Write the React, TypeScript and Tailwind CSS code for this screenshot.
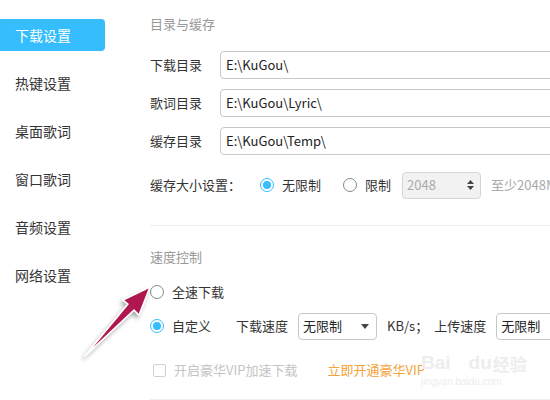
import React from 'react';

const menu = ['下载设置', '热键设置', '桌面歌词', '窗口歌词', '音频设置', '网络设置'];

function Radio({ checked, className = '' }: { checked?: boolean; className?: string }) {
  return checked ? (
    <span className={`w-[14px] h-[14px] rounded-full border-[1.5px] border-[#35bdfe] flex items-center justify-center shrink-0 ${className}`}>
      <span className="w-[8px] h-[8px] rounded-full bg-[#35bdfe]" />
    </span>
  ) : (
    <span className={`block w-[14px] h-[14px] rounded-full border border-[#888] bg-white shrink-0 ${className}`} />
  );
}

function PathRow({ label, value }: { label: string; value: string }) {
  return (
    <div className="flex items-center h-[28px]">
      <span className="w-[70px] shrink-0">{label}</span>
      <div className="w-[360px] shrink-0 h-[28px] border border-[#c8c8c8] rounded-[4px] px-[5px] flex items-center text-[#222]">
        {value}
      </div>
    </div>
  );
}

function Caret() {
  return (
    <svg width="8" height="5" viewBox="0 0 8 5">
      <path d="M0 0h8L4 5z" fill="#444" />
    </svg>
  );
}

export default function App() {
  return (
    <div className="relative w-[550px] h-[400px] overflow-hidden bg-white flex text-[13px] text-[#333] font-['Microsoft_YaHei','Noto_Sans_CJK_SC',sans-serif]">
      {/* Sidebar */}
      <div className="w-[105px] shrink-0 pt-[19px] flex flex-col gap-[16px] text-[14px]">
        {menu.map((m, i) => (
          <div
            key={m}
            className={
              i === 0
                ? 'h-[32px] leading-[32px] pl-[15px] bg-[#35bdfe] text-white rounded-r-[4px]'
                : 'h-[32px] leading-[32px] pl-[15px] text-[#333]'
            }
          >
            {m}
          </div>
        ))}
      </div>

      {/* Content */}
      <div className="ml-[45px] flex-1 min-w-0 flex flex-col">
        <div className="mt-[14px] leading-[20px] text-[#999]">目录与缓存</div>

        <div className="mt-[17px] flex flex-col gap-[10px]">
          <PathRow label="下载目录" value="E:\KuGou\" />
          <PathRow label="歌词目录" value="E:\KuGou\Lyric\" />
          <PathRow label="缓存目录" value="E:\KuGou\Temp\" />
        </div>

        <div className="mt-[16px] flex items-center h-[28px] whitespace-nowrap">
          <span className="w-[110px] shrink-0">缓存大小设置：</span>
          <Radio checked />
          <span className="ml-[8px]">无限制</span>
          <Radio className="ml-[22px]" />
          <span className="ml-[8px]">限制</span>
          <div className="ml-[11px] w-[79px] h-[27px] shrink-0 border border-[#d5d5d5] rounded-[4px] bg-[#f2f2f2] flex items-center justify-between pl-[4px] pr-[6px] text-[#aaa]">
            <span>2048</span>
            <svg width="7" height="12" viewBox="0 0 7 12">
              <path d="M0 5L3.5 1 7 5z M0 7h7L3.5 11z" fill="#444" />
            </svg>
          </div>
          <span className="ml-[10px] text-[#aaa]">至少2048M</span>
        </div>

        <div className="mt-[26px] h-px bg-[#eeeeee]" />

        <div className="mt-[24px] leading-[14px] text-[#999]">速度控制</div>

        <div className="mt-[21px] flex items-center h-[14px]">
          <Radio />
          <span className="ml-[8px]">全速下载</span>
        </div>

        <div className="mt-[13px] flex items-center h-[28px] whitespace-nowrap">
          <Radio checked />
          <span className="ml-[8px] w-[64px] shrink-0">自定义</span>
          <span>下载速度</span>
          <div className="ml-[10px] w-[79px] h-[27px] shrink-0 border border-[#c8c8c8] rounded-[4px] flex items-center justify-between pl-[4px] pr-[7px] text-[#222]">
            <span>无限制</span>
            <Caret />
          </div>
          <span className="ml-[10px]">KB/s；</span>
          <span className="ml-[6px]">上传速度</span>
          <div className="ml-[10px] w-[79px] h-[27px] shrink-0 border border-[#c8c8c8] rounded-[4px] flex items-center justify-between pl-[4px] pr-[7px] text-[#222]">
            <span>无限制</span>
            <Caret />
          </div>
        </div>

        <div className="mt-[22px] flex items-center h-[16px] whitespace-nowrap">
          <span className="ml-[3px] w-[13px] h-[13px] border border-[#d0d0d0] rounded-[2px] shrink-0" />
          <span className="ml-[8px] text-[#c4c4c4]">开启豪华VIP加速下载</span>
          <span className="ml-[30px] text-[#f2a33a]">立即开通豪华VIP</span>
        </div>

        <div className="mt-[21px] h-px bg-[#eeeeee]" />
      </div>

      {/* Watermark */}
      <div className="absolute left-[421px] top-[353px] pointer-events-none leading-none text-[#ededed]">
        <div className="flex items-end font-['Liberation_Sans',sans-serif] text-[19px] font-bold">
          <span>Bai</span>
          <span className="ml-[18px]">du</span>
          <span className="ml-[1px] text-[17px] font-['Noto_Sans_CJK_SC',sans-serif]">经验</span>
        </div>
        <div className="mt-[5px] text-[10px] font-['Liberation_Sans',sans-serif]">jingyan.baidu.com</div>
      </div>

      {/* Annotation arrow */}
      <svg className="absolute left-0 top-0 pointer-events-none" width="550" height="400" viewBox="0 0 550 400">
        <defs>
          <filter id="sh" x="-50%" y="-50%" width="200%" height="200%">
            <feDropShadow dx="-2" dy="3" stdDeviation="2" floodColor="#000" floodOpacity="0.35" />
          </filter>
        </defs>
        <polygon
          points="150,287 139,315 134,310 85,356 128,304 123,300"
          fill="#b0184f"
          stroke="#ffffff"
          strokeWidth="1.5"
          strokeLinejoin="round"
          filter="url(#sh)"
        />
      </svg>
    </div>
  );
}
